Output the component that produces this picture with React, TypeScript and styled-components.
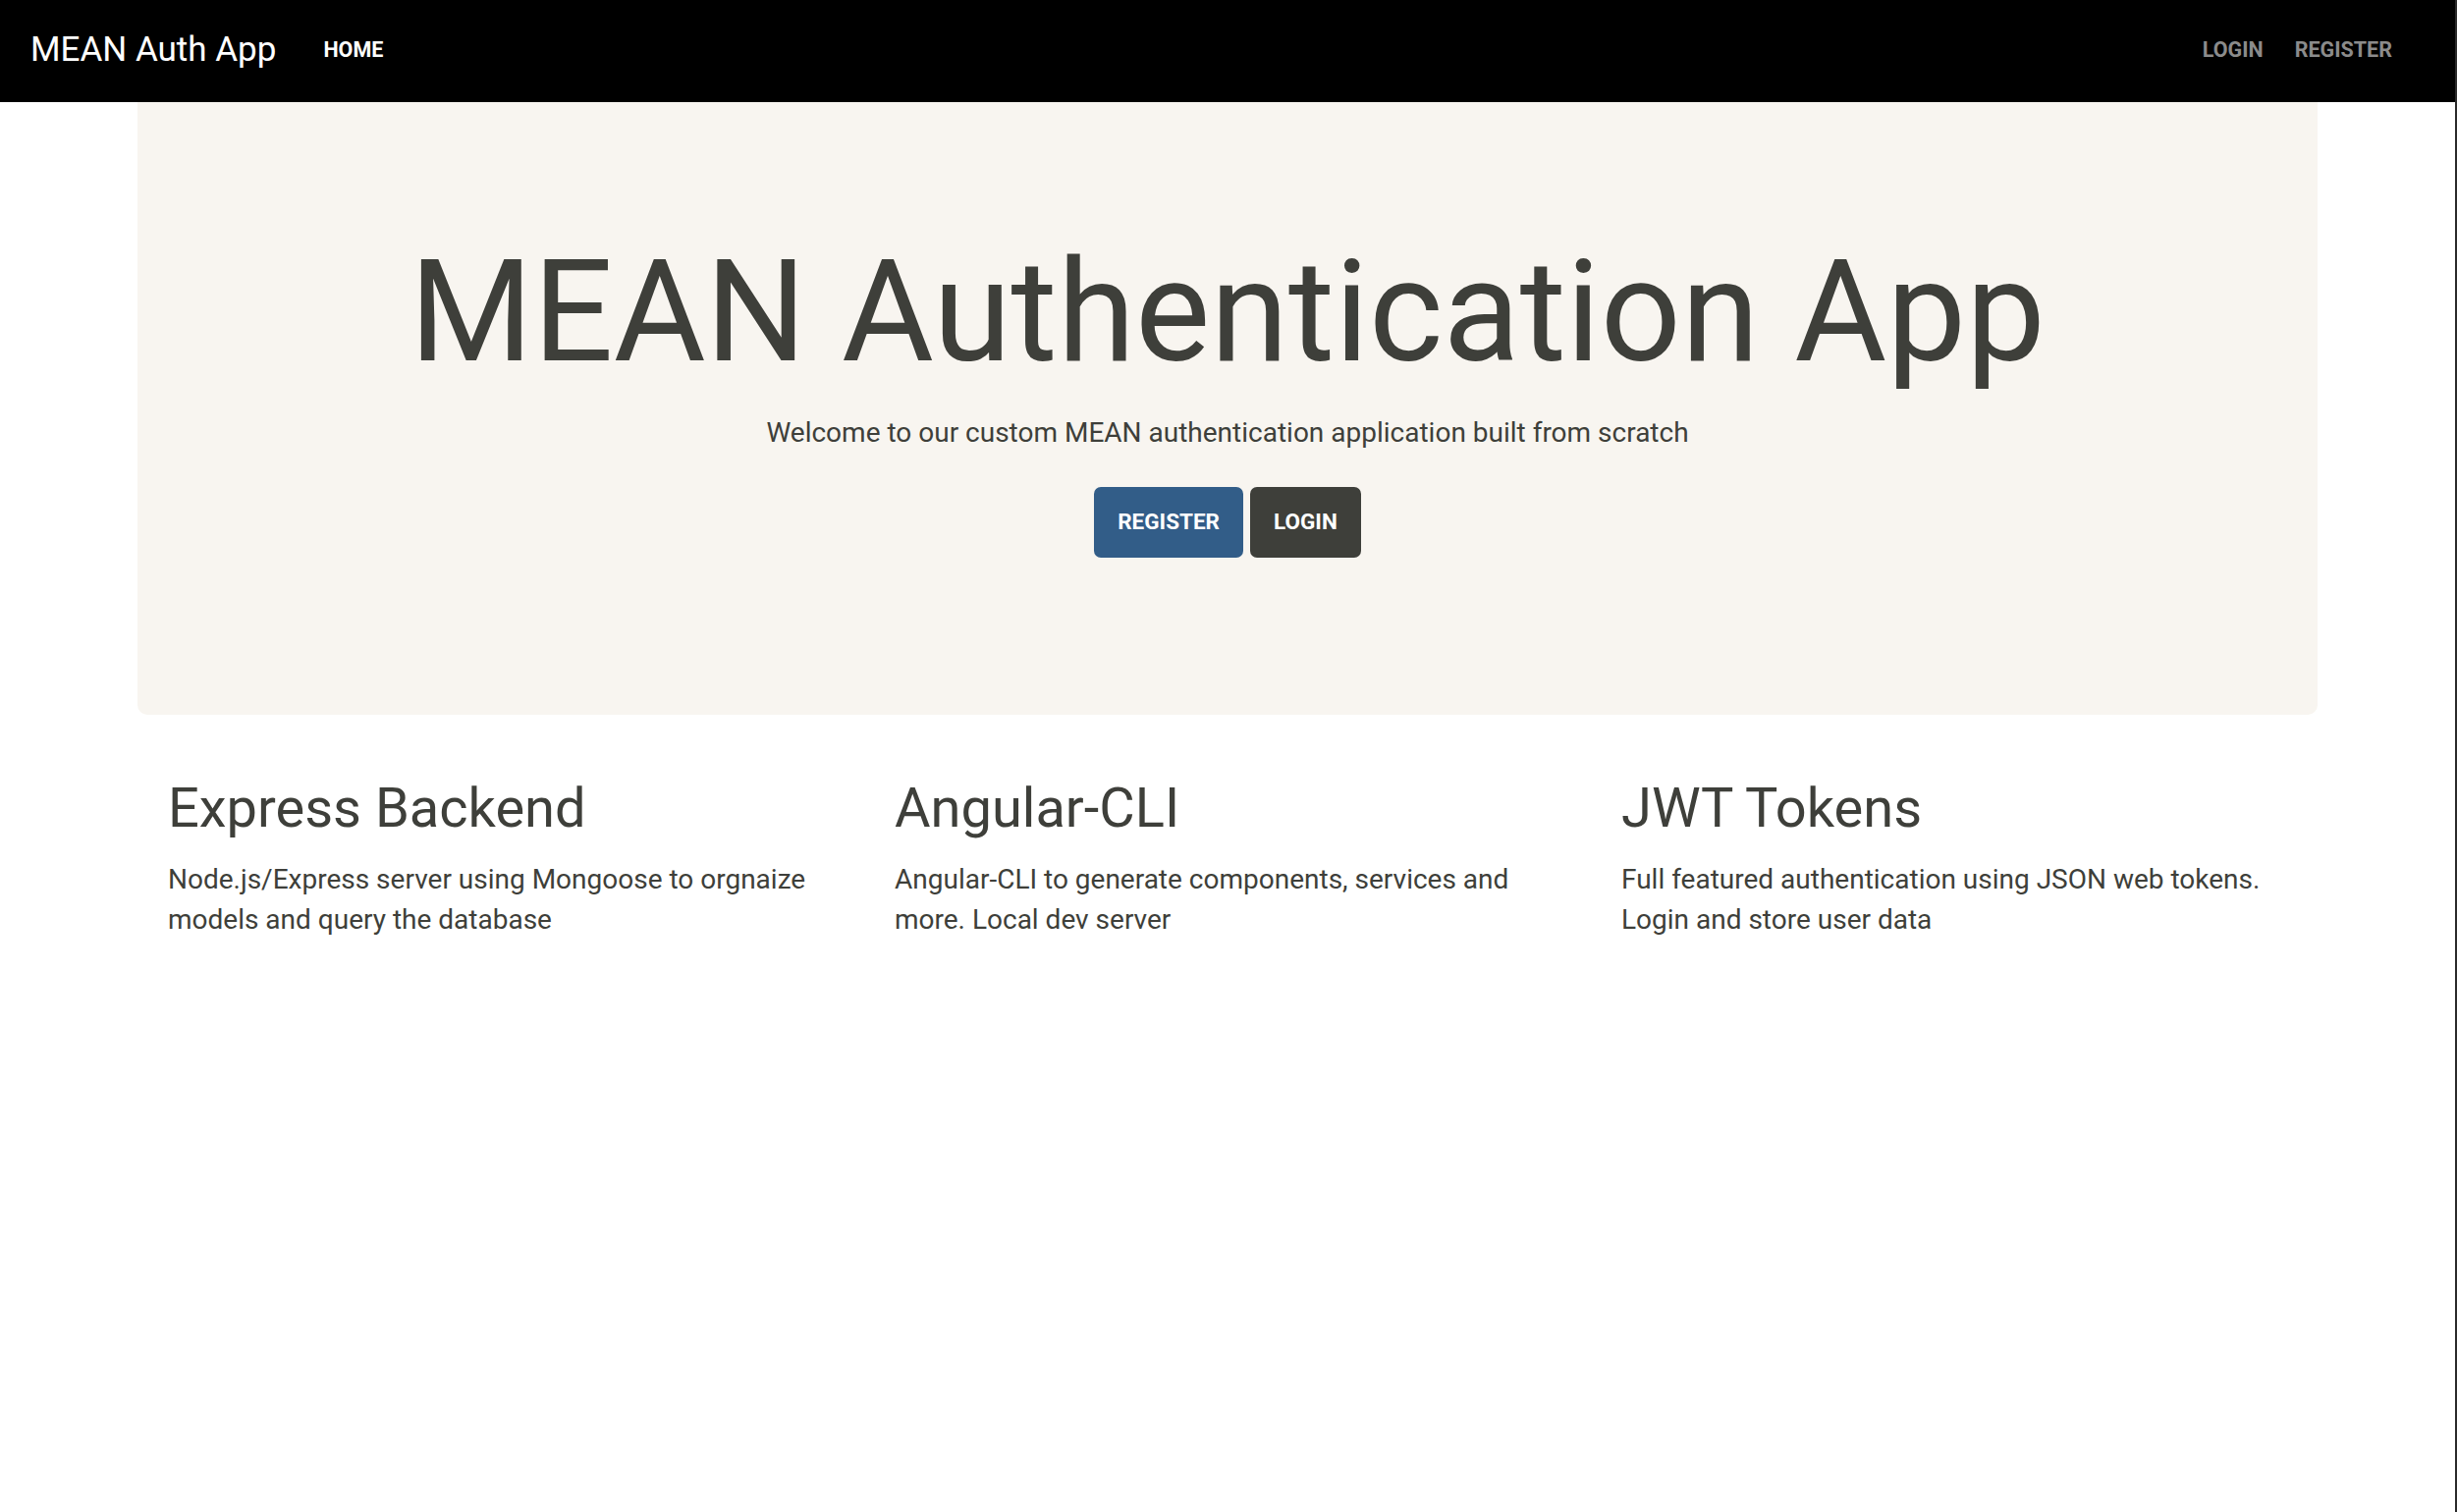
import React from "react";
import styled, { createGlobalStyle } from "styled-components";

const GlobalStyle = createGlobalStyle`
  html, body {
    margin: 0;
    padding: 0;
    background: #ffffff;
  }
  body {
    font-family: Roboto, "Helvetica Neue", Arial, sans-serif;
    color: #3e3f3a;
  }
  * { box-sizing: border-box; }
`;

const Page = styled.div`
  min-height: 100vh;
  border-right: 2px solid #2a2a2a;
  background: #ffffff;
`;

const NavBar = styled.nav`
  height: 104px;
  background: #000000;
  display: flex;
  align-items: center;
  padding: 0 64px 4px 31px;
`;

const Brand = styled.a`
  font-family: Roboto, sans-serif;
  font-size: 35px;
  font-weight: 400;
  color: #ffffff;
  text-decoration: none;
  margin-right: 48px;
`;

const NavGroup = styled.div<{ $right?: boolean }>`
  display: flex;
  align-items: center;
  gap: 32px;
  margin-left: ${(p) => (p.$right ? "auto" : "0")};
`;

const NavLink = styled.a<{ $active?: boolean }>`
  font-family: Roboto, sans-serif;
  font-size: 21.5px;
  font-weight: 700;
  text-transform: uppercase;
  color: ${(p) => (p.$active ? "#ffffff" : "#8b8b8b")};
  text-decoration: none;
`;

const Container = styled.main`
  width: 2220px;
  margin: 0 auto;
`;

const Jumbotron = styled.section`
  background: #f8f5f0;
  border-radius: 0 0 10px 10px;
  padding: 134px 30px 160px;
  display: flex;
  flex-direction: column;
  align-items: center;
  text-align: center;
`;

const Title = styled.h1`
  margin: 0;
  font-family: Roboto, sans-serif;
  font-size: 144px;
  font-weight: 400;
  line-height: 1.115;
  color: #3e3f3a;
`;

const Lead = styled.p`
  margin: 22px 0 0;
  font-family: Roboto, sans-serif;
  font-size: 28px;
  line-height: 40px;
  color: #3e3f3a;
`;

const ButtonRow = styled.div`
  display: flex;
  gap: 7px;
  margin-top: 35px;
`;

const Button = styled.a<{ $variant: "primary" | "dark" }>`
  display: inline-flex;
  align-items: center;
  justify-content: center;
  height: 72px;
  padding: 0 24px 2px;
  border-radius: 7px;
  font-family: Roboto, sans-serif;
  font-size: 22.5px;
  font-weight: 700;
  text-transform: uppercase;
  color: #ffffff;
  text-decoration: none;
  background: ${(p) => (p.$variant === "primary" ? "#325d88" : "#3e3f3a")};
`;

const Features = styled.section`
  display: grid;
  grid-template-columns: repeat(3, 1fr);
  margin-top: 65px;
`;

const Feature = styled.div`
  padding: 0 31px;
`;

const FeatureTitle = styled.h2`
  margin: 0;
  font-family: Roboto, sans-serif;
  font-size: 56px;
  font-weight: 400;
  line-height: 1.1;
  color: #3e3f3a;
`;

const FeatureText = styled.p`
  margin: 21px 0 0;
  font-family: Roboto, sans-serif;
  font-size: 28px;
  line-height: 41px;
  color: #3e3f3a;
`;

const features = [
  {
    title: "Express Backend",
    text: "Node.js/Express server using Mongoose to orgnaize models and query the database",
  },
  {
    title: "Angular-CLI",
    text: "Angular-CLI to generate components, services and more. Local dev server",
  },
  {
    title: "JWT Tokens",
    text: "Full featured authentication using JSON web tokens. Login and store user data",
  },
];

export default function App() {
  return (
    <Page>
      <GlobalStyle />
      <NavBar>
        <Brand href="#">MEAN Auth App</Brand>
        <NavGroup>
          <NavLink href="#" $active>
            Home
          </NavLink>
        </NavGroup>
        <NavGroup $right>
          <NavLink href="#">Login</NavLink>
          <NavLink href="#">Register</NavLink>
        </NavGroup>
      </NavBar>
      <Container>
        <Jumbotron>
          <Title>MEAN Authentication App</Title>
          <Lead>Welcome to our custom MEAN authentication application built from scratch</Lead>
          <ButtonRow>
            <Button href="#" $variant="primary">
              Register
            </Button>
            <Button href="#" $variant="dark">
              Login
            </Button>
          </ButtonRow>
        </Jumbotron>
        <Features>
          {features.map((f) => (
            <Feature key={f.title}>
              <FeatureTitle>{f.title}</FeatureTitle>
              <FeatureText>{f.text}</FeatureText>
            </Feature>
          ))}
        </Features>
      </Container>
    </Page>
  );
}
